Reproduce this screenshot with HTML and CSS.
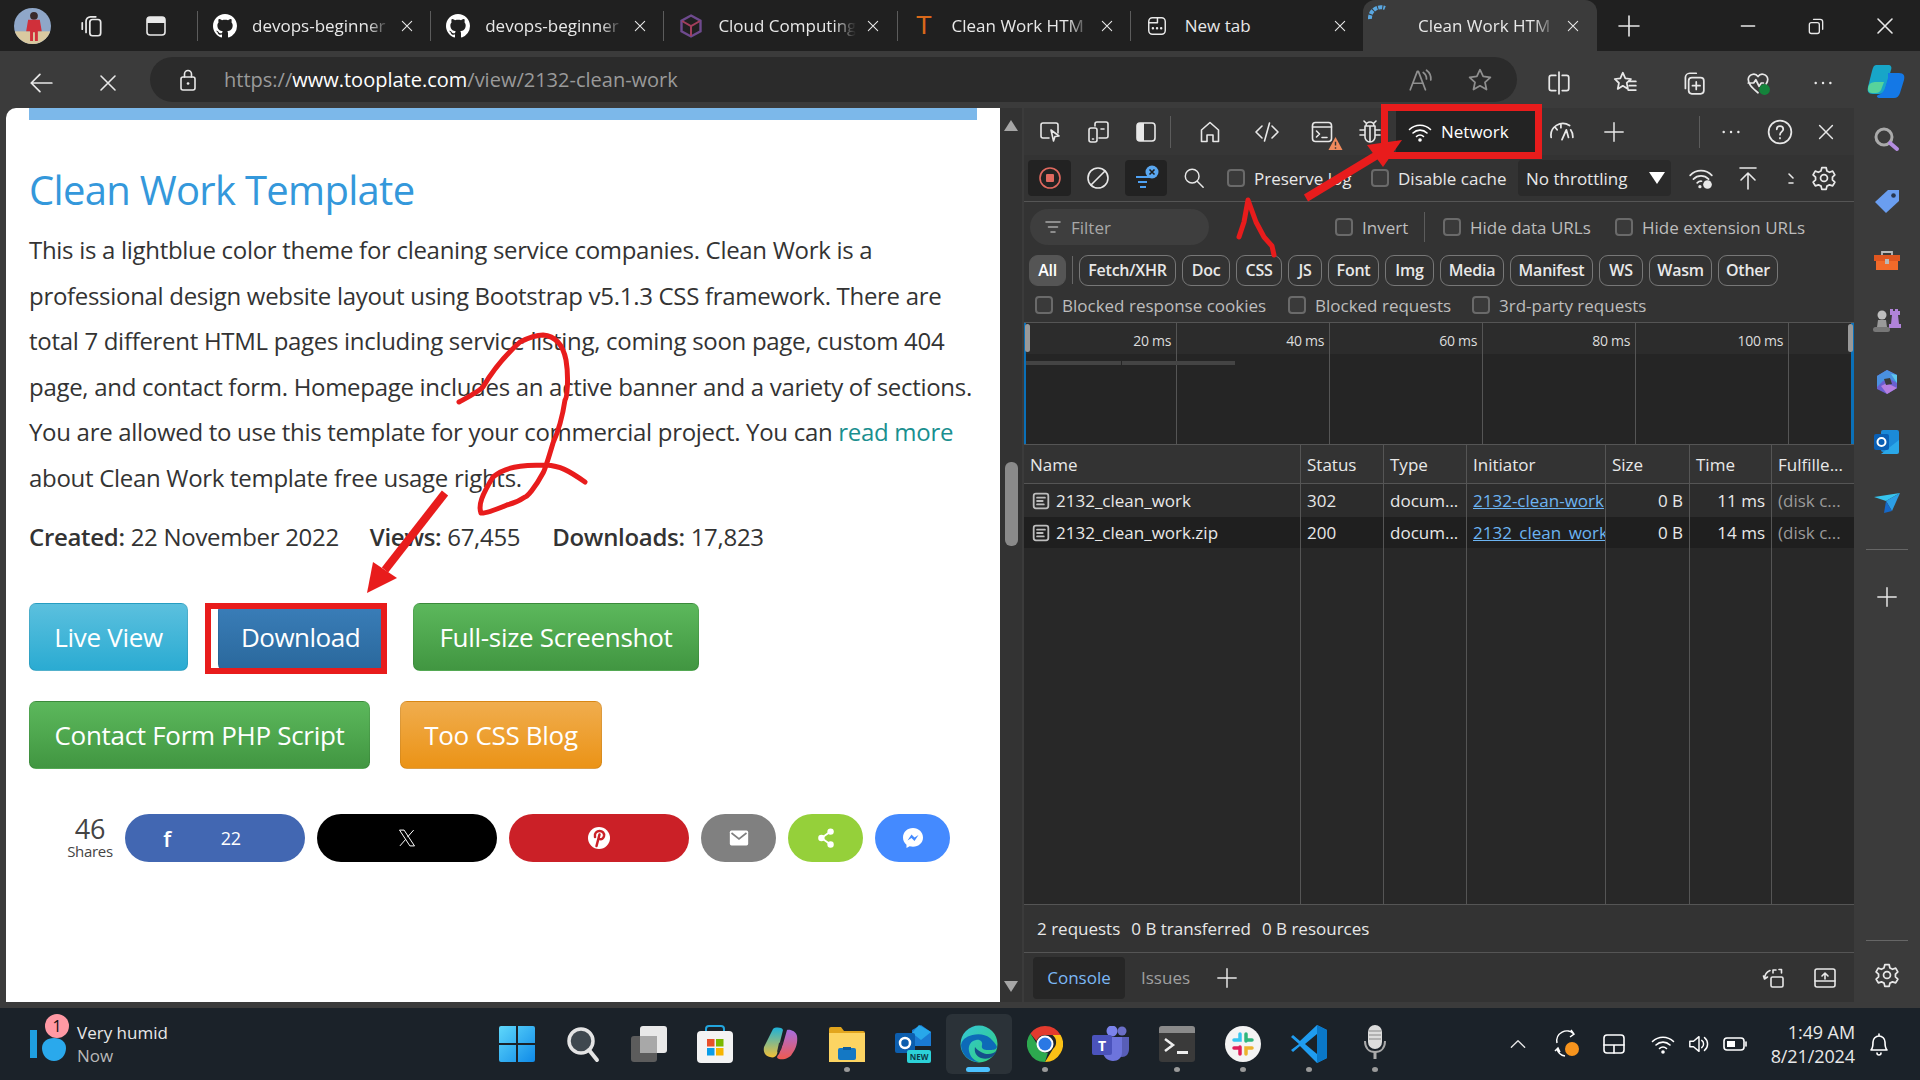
FILE: index.html
```html
<!DOCTYPE html>
<html lang="en">
<head>
    <meta charset="UTF-8">
    <title>Clean Work HTML Template</title>
    <link rel="stylesheet" href="styles.css">
</head>
<body>
    <!-- shared icons -->
    <svg class="icon-defs" width="0" height="0">
        <symbol id="i-close" viewBox="0 0 24 24"><path d="M5 5l14 14M19 5L5 19"/></symbol>
        <symbol id="i-plus" viewBox="0 0 24 24"><path d="M12 2v20M2 12h20"/></symbol>
        <symbol id="i-gear" viewBox="0 0 24 24"><circle cx="12" cy="12" r="3.2"/><path d="M10 2.5h4l.7 3 2.4 1.2 2.9-1 2 3.4-2.2 2.1v2.6l2.2 2.1-2 3.4-2.9-1-2.4 1.2-.7 3h-4l-.7-3-2.4-1.2-2.9 1-2-3.4 2.2-2.1v-2.6L1.9 9.1l2-3.4 2.9 1 2.4-1.2z"/></symbol>
        <symbol id="i-github" viewBox="0 0 16 16"><path class="solid" d="M8 0C3.58 0 0 3.58 0 8c0 3.54 2.29 6.53 5.47 7.59.4.07.55-.17.55-.38 0-.19-.01-.82-.01-1.49-2.01.37-2.53-.49-2.69-.94-.09-.23-.48-.94-.82-1.13-.28-.15-.68-.52-.01-.53.63-.01 1.08.58 1.23.82.72 1.21 1.87.87 2.33.66.07-.52.28-.87.51-1.07-1.78-.2-3.64-.89-3.64-3.95 0-.87.31-1.59.82-2.15-.08-.2-.36-1.02.08-2.12 0 0 .67-.21 2.2.82.64-.18 1.32-.27 2-.27.68 0 1.36.09 2 .27 1.53-1.04 2.2-.82 2.2-.82.44 1.1.16 1.92.08 2.12.51.56.82 1.27.82 2.15 0 3.07-1.87 3.75-3.65 3.95.29.25.54.73.54 1.48 0 1.07-.01 1.93-.01 2.2 0 .21.15.46.55.38A8.013 8.013 0 0016 8c0-4.42-3.58-8-8-8z"/></symbol>
        <symbol id="i-doc" viewBox="0 0 16 16"><rect x="1.5" y="1.5" width="13" height="13" rx="2"/><path d="M4.5 5h7M4.5 8h5M4.5 11h6"/></symbol>
    </svg>

    <header class="tabstrip">
        <div class="strip-left">
            <div class="avatar"><svg viewBox="0 0 37 37"><rect y="24" width="37" height="13" fill="#d9c9a0"/><circle cx="20" cy="8" r="4" fill="#3a2a2a"/><path d="M14 12h12l2 12h-4v10h-3v-9h-2v9h-3V24h-4z" fill="#d0303a"/></svg></div>
            <svg class="ico ico-26" viewBox="0 0 24 24"><rect x="10" y="6" width="10" height="15" rx="2.5"/><path d="M6.5 18V7.500a4 4 0 014-4h5M3 15V9"/></svg>
            <svg class="ico ico-24" viewBox="0 0 24 24"><rect x="3" y="3" width="18" height="18" rx="3"/><path class="solid" d="M3 6a3 3 0 013-3h12a3 3 0 013 3v3H3z"/></svg>
        </div>
        <div class="tab">
            <svg class="tab-icon"><use href="#i-github"/></svg><span class="tab-title">devops-beginner</span><svg class="ico tab-close"><use href="#i-close"/></svg>
        </div>
        <div class="tab">
            <svg class="tab-icon"><use href="#i-github"/></svg><span class="tab-title">devops-beginner</span><svg class="ico tab-close"><use href="#i-close"/></svg>
        </div>
        <div class="tab">
            <svg class="tab-icon" viewBox="0 0 24 24"><path d="M12 1.500l9.500 5.200v10.600L12 22.500l-9.500-5.200V6.700z" fill="none" stroke="#6e4a8e" stroke-width="2.400"/><path d="M3 7l9 5 9-5M12 12v10" fill="none" stroke="#a23f5c" stroke-width="2"/></svg><span class="tab-title">Cloud Computing</span><svg class="ico tab-close"><use href="#i-close"/></svg>
        </div>
        <div class="tab">
            <span class="tab-letter">T</span><span class="tab-title">Clean Work HTM</span><svg class="ico tab-close"><use href="#i-close"/></svg>
        </div>
        <div class="tab">
            <svg class="ico ico-22" viewBox="0 0 24 24"><rect x="3" y="3" width="18" height="18" rx="4"/><path d="M3 8.500h9.500V3"/><path class="dots" d="M7.500 14.500h.1M12 14.500h.1M16.500 14.500h.1"/></svg><span class="tab-title tab-plain">New tab</span><svg class="ico tab-close"><use href="#i-close"/></svg>
        </div>
        <div class="tab tab-active">
            <svg class="tab-spinner" viewBox="0 0 24 24"><path d="M3 15A11 11 0 0118 4"/></svg><span class="tab-title">Clean Work HTM</span><svg class="ico tab-close"><use href="#i-close"/></svg>
        </div>
        <div class="strip-right">
            <svg class="ico ico-24"><use href="#i-plus"/></svg>
            <span></span>
            <svg class="ico ico-20" viewBox="0 0 24 24"><path d="M4 12h16"/></svg>
            <svg class="ico ico-20" viewBox="0 0 24 24"><rect x="4" y="8" width="12" height="13" rx="2.500"/><path d="M9 4h8a3 3 0 013 3v9"/></svg>
            <svg class="ico ico-24"><use href="#i-close"/></svg>
        </div>
    </header>

    <nav class="toolbar">
        <svg class="ico ico-26" viewBox="0 0 24 24"><path d="M22 12H3M11 4l-8 8 8 8"/></svg>
        <svg class="ico ico-24"><use href="#i-close"/></svg>
        <span></span>
        <div class="address">
            <svg class="ico ico-24" viewBox="0 0 24 24"><rect x="5" y="9" width="14" height="13" rx="2"/><path d="M8.500 9V6a3.500 3.500 0 017 0v3"/><path class="dots" d="M12 15.500h.1"/></svg>
            <span class="url">https://<b>www.tooplate.com</b>/view/2132-clean-work</span>
            <svg class="ico ico-26 dim addr-read" viewBox="0 0 24 24"><path d="M3 21L9.500 4h1L17 21M5.500 15h9.500M15 5a7 7 0 013 6M18 3a10 10 0 014 9"/></svg>
            <svg class="ico ico-26 dim" viewBox="0 0 24 24"><path d="M12 2.500l2.900 6.200 6.700.8-5 4.600 1.400 6.700-6-3.400-6 3.400 1.400-6.700-5-4.600 6.700-.8z"/></svg>
        </div>
        <svg class="ico ico-26" viewBox="0 0 24 24"><path d="M12 2v20M9 5H5a2 2 0 00-2 2v10a2 2 0 002 2h4M15 5h4a2 2 0 012 2v10a2 2 0 01-2 2h-4"/></svg>
        <svg class="ico ico-26" viewBox="0 0 24 24"><path d="M10 2.500l2.300 5.200 5.200.6-3.900 3.600 1.100 5.600-4.700-2.900-4.700 2.900L6.400 12 2.500 8.300l5.200-.6zM16 10.500h6M16 14.500h6M15 18.500h7"/></svg>
        <svg class="ico ico-26" viewBox="0 0 24 24"><rect x="8" y="7" width="14" height="15" rx="3"/><path d="M15 11v7M11.500 14.500h7M5 17V7a4 4 0 014-4h6"/></svg>
        <svg class="ico ico-26" viewBox="0 0 24 24"><path d="M12 21C6 16 3 13 3 8.500A5 5 0 0112 6a5 5 0 019 2.500c0 1.500-.5 3-1.500 4.500M3 12h5l2-3 3 6 2-3h2"/><circle class="check" cx="18" cy="18" r="5"/></svg>
        <svg class="ico ico-22" viewBox="0 0 24 24"><path class="dots" d="M4 12h.1M12 12h.1M20 12h.1"/></svg>
        <svg class="logo-copilot" viewBox="0 0 40 40"><path d="M10 4h12c3 0 4 2 3 5l-6 20c-1 3-3 4-6 4H7C2 33 1 30 2 26L6 10c1-4 2-6 4-6z" fill="#17a6c8"/><path d="M3 24c2-3 5-3 8-3h7l-3 8c-1 2-3 3-5 3H6c-4 0-5-4-3-8z" fill="#57d39b"/><path d="M22 12h11c5 0 6 3 5 7l-4 13c-1 3-3 5-6 5H14c-3 0-4-2-2-3 4-1 6-4 7-7l3-10z" fill="#1478e6"/></svg>
    </nav>

    <main class="window">
        <section class="page">
            <div class="page-bar"></div>
            <h1>Clean Work Template</h1>
            <p class="intro">This is a lightblue color theme for cleaning service companies. Clean Work is a professional design website layout using Bootstrap v5.1.3 CSS framework. There are total 7 different HTML pages including service listing, coming soon page, custom 404 page, and contact form. Homepage includes an active banner and a variety of sections. You are allowed to use this template for your commercial project. You can <a href="#">read more</a> about Clean Work template free usage rights.</p>
            <div class="stats">
                <span class="stat-created"><b>Created:</b> 22 November 2022</span>
                <span class="stat-views"><b>Views:</b> 67,455</span>
                <span><b>Downloads:</b> 17,823</span>
            </div>
            <div class="btn-row">
                <a class="btn btn-info btn-live">Live View</a>
                <a class="btn btn-primary btn-download">Download</a>
                <a class="btn btn-success btn-shot">Full-size Screenshot</a>
            </div>
            <div class="btn-row">
                <a class="btn btn-success btn-contact">Contact Form PHP Script</a>
                <a class="btn btn-warning btn-blog">Too CSS Blog</a>
            </div>
            <div class="share">
                <div class="share-count"><strong>46</strong><span>Shares</span></div>
                <a class="pill pill-fb"><b>f</b><span>22</span></a>
                <a class="pill pill-x"><svg viewBox="0 0 24 24" width="20" height="22"><path fill="none" stroke="#fff" stroke-width="1.200" d="M3 2.500h5.500L21 21.500h-5.500zM20 2.500l-7.500 8.500M10.500 13.500L3.500 21.500"/></svg></a>
                <a class="pill pill-pin"><svg viewBox="0 0 24 24" width="24" height="24"><circle cx="12" cy="12" r="11" fill="#fff"/><path d="M8 11c-1-4 2-6 4.500-6 3 0 5 2 4.500 5-.5 2.500-2.500 4-4.500 3M12.500 8.500L9.500 20" fill="none" stroke="#cb2027" stroke-width="2.500" stroke-linecap="round"/></svg></a>
                <a class="pill pill-sm pill-mail"><svg viewBox="0 0 24 24" width="22" height="20"><rect x="1" y="3" width="22" height="18" rx="2" fill="#fff"/><path d="M3 6l9 7 9-7" fill="none" stroke="#808080" stroke-width="2"/></svg></a>
                <a class="pill pill-sm pill-more"><svg viewBox="0 0 24 24" width="22" height="22"><path d="M17 5L7 12l10 7" fill="none" stroke="#fff" stroke-width="2"/><circle cx="17" cy="5" r="3.500" fill="#fff"/><circle cx="7" cy="12" r="3.500" fill="#fff"/><circle cx="17" cy="19" r="3.500" fill="#fff"/></svg></a>
                <a class="pill pill-sm pill-msg"><svg viewBox="0 0 24 24" width="24" height="24"><path d="M12 2C6.300 2 2 6.100 2 11.500c0 3 1.300 5.500 3.500 7.300V22l3.100-1.700c1.100.3 2.200.5 3.400.5 5.700 0 10-4.100 10-9.300S17.700 2 12 2z" fill="#fff"/><path d="M6.500 14.500l4-6 3 3 4-2.500-4 6-3-3z" fill="#448aff"/></svg></a>
            </div>
        </section>

        <div class="page-scroll">
            <span class="scroll-up"></span>
            <span class="scroll-thumb"></span>
            <span class="scroll-down"></span>
        </div>

        <section class="devtools">
            <div class="dt-tabs">
                <svg class="ico ico-24" viewBox="0 0 24 24"><path d="M20 13V5a2 2 0 00-2-2H5a2 2 0 00-2 2v11a2 2 0 002 2h6"/><path d="M13 10l8 6-4 .5-1.500 4.500z"/></svg>
                <svg class="ico ico-24" viewBox="0 0 24 24"><path d="M9 6V4a2 2 0 012-2h9a2 2 0 012 2v12a2 2 0 01-2 2h-7M15 9h3"/><rect x="3" y="8" width="8" height="14" rx="2"/><path d="M6.500 19h1"/></svg>
                <svg class="ico ico-24" viewBox="0 0 24 24"><rect x="3" y="3" width="18" height="18" rx="3"/><path class="solid" d="M3 6a3 3 0 013-3h4v18H6a3 3 0 01-3-3z"/></svg>
                <span class="dt-sep"></span>
                <svg class="ico ico-24" viewBox="0 0 24 24"><path d="M12 2.500L3.500 10v11.500H9V15h6v6.500h5.500V10z"/></svg>
                <svg class="ico ico-24" viewBox="0 0 24 24"><path d="M7 6l-6 6 6 6M17 6l6 6-6 6M14.500 3l-5 18"/></svg>
                <div class="console-icon">
                    <svg class="ico ico-24" viewBox="0 0 24 24"><rect x="2.500" y="2.500" width="19" height="19" rx="3"/><path d="M2.500 7h19M6.500 11l3 3-3 3M12 17.500h5"/></svg>
                    <svg class="warn" viewBox="0 0 16 16"><path d="M8 1l7.500 14H.5z" fill="#f08a5d"/><path d="M8 6v4M8 12v1.500" stroke="#333" stroke-width="1.500"/></svg>
                </div>
                <svg class="ico ico-24" viewBox="0 0 24 24"><path d="M8 6a4 4 0 018 0M7 6h10v11a5 5 0 01-10 0zM12 6v16M7 10H2M7 15H2M17 10h5M17 15h5M8 3L6 1M16 3l2-2"/></svg>
                <span></span>
                <div class="dt-network">
                    <svg class="ico ico-24" viewBox="0 0 24 24"><path d="M1.500 9.500a15 15 0 0121 0M5 13a10 10 0 0114 0M8.500 16.500a5 5 0 017 0"/><circle class="solid" cx="12" cy="20" r="1.800"/></svg>
                    <span>Network</span>
                </div>
                <svg class="ico ico-26" viewBox="0 0 24 24"><path d="M2 17A11 11 0 0119 6M22 17a11 11 0 00-2-7M6 8l1.500 2M11 5.500v2.500M12 19l4-9 2 7"/></svg>
                <svg class="ico ico-22"><use href="#i-plus"/></svg>
                <span class="dt-sep dt-sep-end"></span>
                <svg class="ico ico-22" viewBox="0 0 24 24"><path class="dots" d="M4 12h.1M12 12h.1M20 12h.1"/></svg>
                <svg class="ico ico-26" viewBox="0 0 24 24"><circle cx="12" cy="12" r="10.500"/><path d="M9 9.500a3 3 0 116 0c0 2-3 2.500-3 5M12 17.500v.5"/></svg>
                <svg class="ico ico-22"><use href="#i-close"/></svg>
            </div>

            <div class="dt-controls">
                <div class="tool-box"><svg class="ico ico-24 rec" viewBox="0 0 24 24"><circle cx="12" cy="12" r="10"/><rect class="solid" x="8" y="8" width="8" height="8" rx="1"/></svg></div>
                <svg class="ico ico-24" viewBox="0 0 24 24"><circle cx="12" cy="12" r="10"/><path d="M5 19L19 5"/></svg>
                <div class="tool-box filter-toggle">
                    <svg width="26" height="26" viewBox="0 0 26 26"><path d="M3 12h14M5 17h9M7 22h6" fill="none" stroke="#4ea1f3" stroke-width="1.800"/><circle cx="19" cy="7" r="6.500" fill="#5aa7f0"/><path d="M16.500 4.500l5 5M21.500 4.500l-5 5" stroke="#1d1d1d" stroke-width="1.600"/></svg>
                </div>
                <svg class="ico ico-22" viewBox="0 0 24 24"><circle cx="10" cy="10" r="7.500"/><path d="M15.500 15.500L22 22"/></svg>
                <label class="check check-first"><i></i>Preserve log</label>
                <label class="check"><i></i>Disable cache</label>
                <div class="throttle"><span>No throttling</span><i></i></div>
                <svg class="ico ico-26" viewBox="0 0 24 24"><path d="M2 9.500a14 14 0 0120 0M5 13a10 10 0 0114 0M8.500 16.500a5 5 0 014-1.500"/><circle class="solid" cx="11" cy="20" r="1.500"/><circle class="solid" cx="18" cy="18" r="4"/></svg>
                <svg class="ico ico-24" viewBox="0 0 24 24"><path d="M4 2h16M12 23V7M5 14l7-7 7 7"/></svg>
                <svg class="ico chevrons" viewBox="0 0 16 16"><path d="M6 4l4 4M6 13h4"/></svg>
                <svg class="ico ico-26"><use href="#i-gear"/></svg>
            </div>

            <div class="dt-filter">
                <div class="filter-input">
                    <svg class="ico filter-lines" viewBox="0 0 16 16"><path d="M1 3h14M3.500 8h9M6 13h4"/></svg>
                    <span>Filter</span>
                </div>
                <span></span>
                <label class="check dim-label"><i></i>Invert</label>
                <span class="dt-sep"></span>
                <label class="check dim-label"><i></i>Hide data URLs</label>
                <label class="check dim-label"><i></i>Hide extension URLs</label>
            </div>

            <div class="dt-chips">
                <span class="chip chip-all">All</span>
                <span class="chip-sep"></span>
                <span class="chip">Fetch/XHR</span>
                <span class="chip">Doc</span>
                <span class="chip">CSS</span>
                <span class="chip">JS</span>
                <span class="chip">Font</span>
                <span class="chip">Img</span>
                <span class="chip">Media</span>
                <span class="chip">Manifest</span>
                <span class="chip">WS</span>
                <span class="chip">Wasm</span>
                <span class="chip">Other</span>
            </div>

            <div class="dt-blocked">
                <label class="check dim-label"><i></i>Blocked response cookies</label>
                <label class="check dim-label"><i></i>Blocked requests</label>
                <label class="check dim-label"><i></i>3rd-party requests</label>
            </div>

            <div class="overview">
                <div class="ov-cell">20 ms</div>
                <div class="ov-cell">40 ms</div>
                <div class="ov-cell">60 ms</div>
                <div class="ov-cell">80 ms</div>
                <div class="ov-cell">100 ms</div>
                <span class="ov-bar ov-bar-a"></span>
                <span class="ov-bar ov-bar-b"></span>
                <span class="ov-handle ov-handle-l"></span>
                <span class="ov-handle ov-handle-r"></span>
            </div>

            <div class="requests">
                <div class="th">Name</div><div class="th">Status</div><div class="th">Type</div><div class="th">Initiator</div><div class="th">Size</div><div class="th">Time</div><div class="th">Fulfille...</div>

                <div class="td"><svg class="ico doc-icon"><use href="#i-doc"/></svg>2132_clean_work</div><div class="td">302</div><div class="td">docum...</div><div class="td td-link"><a href="#">2132-clean-work</a></div><div class="td td-num">0 B</div><div class="td td-num">11 ms</div><div class="td td-dim">(disk c...</div>

                <div class="td td-alt"><svg class="ico doc-icon"><use href="#i-doc"/></svg>2132_clean_work.zip</div><div class="td td-alt">200</div><div class="td td-alt">docum...</div><div class="td td-alt td-link"><a href="#">2132_clean_work</a></div><div class="td td-alt td-num">0 B</div><div class="td td-alt td-num">14 ms</div><div class="td td-alt td-dim">(disk c...</div>

                <div class="tf"></div><div class="tf"></div><div class="tf"></div><div class="tf"></div><div class="tf"></div><div class="tf"></div><div class="tf"></div>
            </div>

            <div class="dt-summary"><span>2 requests</span><span>0 B transferred</span><span>0 B resources</span></div>

            <div class="drawer">
                <span class="drawer-tab">Console</span>
                <span class="drawer-issues">Issues</span>
                <svg class="ico ico-22"><use href="#i-plus"/></svg>
                <svg class="ico ico-24 drawer-rotate" viewBox="0 0 24 24"><rect x="9" y="11" width="12" height="10" rx="1.500"/><path d="M11 7V4h3M17 3.500h2.500V7M8 4.500C4.500 6 2.500 9 2.500 13l3-2M2.500 13l-1-3"/></svg>
                <svg class="ico ico-24" viewBox="0 0 24 24"><rect x="2" y="3" width="20" height="18" rx="2"/><path d="M2 15h20M12 13V7M9 10l3-3 3 3"/></svg>
            </div>
        </section>

        <aside class="sidebar">
            <svg width="30" height="30" viewBox="0 0 30 30"><circle cx="12" cy="12" r="8" fill="none" stroke="#aaa" stroke-width="3"/><path d="M18 18l7 6" stroke="#b48de0" stroke-width="4" stroke-linecap="round"/></svg>
            <svg width="28" height="28" viewBox="0 0 28 28"><path d="M2 15L15 3h11v11L13 26z" fill="#6a9ef0"/><circle cx="20.500" cy="8.500" r="2.300" fill="#28374f"/></svg>
            <svg width="28" height="28" viewBox="0 0 28 28"><path d="M9 9V5h10v4" fill="none" stroke="#bbb" stroke-width="1.800"/><rect x="1" y="8" width="26" height="6" fill="#e0561f"/><rect x="3" y="14" width="22" height="9" fill="#f26a2a"/><rect x="12" y="12" width="4" height="5" fill="#b9b9b9"/></svg>
            <svg width="30" height="30" viewBox="0 0 30 30"><path d="M18 3h3v2h2V3h3v2h2v4h-2l1 9h2v4H17v-4h2l1-9h-2z" fill="#b083d8"/><circle cx="10" cy="9" r="4.500" fill="#c0c0c0"/><path d="M6 14h8l1 7H5z" fill="#9a9a9a"/><rect x="1" y="21" width="17" height="5" rx="2.500" fill="#777"/></svg>
            <svg width="28" height="28" viewBox="0 0 28 28"><path d="M14 2l10 5v13l-10 6-10-5V8z" fill="#6a5fd0"/><path d="M14 2l10 5v8l-7-4-7 2-6 6V8z" fill="#4a90e0"/><path d="M8 18l6-3 10 5-10 6z" fill="#b57fe0"/><path d="M18 6l6 1v8z" fill="#5ec8ee"/><path d="M11 11l6-1 2 6-6 1z" fill="#3b3b3b"/></svg>
            <svg width="28" height="28" viewBox="0 0 28 28"><rect x="8" y="2" width="18" height="22" rx="2" fill="#1b8ad8"/><path d="M26 12v12a2 2 0 01-2 2H8z" fill="#2aa7e8"/><rect x="1" y="6" width="15" height="16" rx="2" fill="#0a5fb4"/><circle cx="8.500" cy="14" r="4" fill="none" stroke="#fff" stroke-width="2"/></svg>
            <svg width="28" height="28" viewBox="0 0 28 28"><path d="M1 8l26-4-14 8z" fill="#36c4ee"/><path d="M27 4L19 22l-6-10z" fill="#2c9fe6"/><path d="M13 12l-2 12 8-2z" fill="#1668c8"/></svg>
            <span class="side-sep"></span>
            <svg class="ico ico-22"><use href="#i-plus"/></svg>
            <span></span>
            <span class="side-sep"></span>
            <svg class="ico ico-26 side-gear"><use href="#i-gear"/></svg>
        </aside>
    </main>

    <footer class="taskbar">
        <div class="weather">
            <div class="weather-icon">
                <svg width="38" height="32" viewBox="0 0 38 32"><rect x="0" y="0" width="7" height="28" fill="#1f9fe0"/><path d="M12 18c0-6 5-10 12-10s12 4 12 10c0 7-5 13-12 13s-12-6-12-13z" fill="#2aa9ec"/></svg>
                <span class="badge">1</span>
            </div>
            <div class="weather-text"><span>Very humid</span><small>Now</small></div>
        </div>

        <div class="task-slot"><svg width="36" height="36" viewBox="0 0 36 36"><defs><linearGradient id="w" x1="0" y1="0" x2="1" y2="1"><stop offset="0" stop-color="#5fd8fb"/><stop offset="1" stop-color="#0f8ae8"/></linearGradient></defs><path d="M0 2a2 2 0 012-2h15v17H0zM19 0h15a2 2 0 012 2v15H19zM0 19h17v17H2a2 2 0 01-2-2zM19 19h17v15a2 2 0 01-2 2H19z" fill="url(#w)"/></svg></div>
        <div class="task-slot"><svg width="36" height="38" viewBox="0 0 36 38"><circle cx="16" cy="16" r="12" fill="#3f484f" stroke="#e4e4e4" stroke-width="3.500"/><path d="M24 25l8 10" stroke="#e4e4e4" stroke-width="4" stroke-linecap="round"/></svg></div>
        <div class="task-slot"><svg width="36" height="36" viewBox="0 0 36 36"><rect x="0" y="10" width="26" height="26" rx="3" fill="#5c5c5c"/><rect x="9" y="0" width="27" height="27" rx="3" fill="#e9e9e9"/><rect x="9" y="10" width="17" height="17" fill="#a8a8a8"/></svg></div>
        <div class="task-slot"><svg width="36" height="38" viewBox="0 0 36 38"><path d="M9 8V4a3 3 0 013-3h12a3 3 0 013 3v4" fill="none" stroke="#22a5dd" stroke-width="2"/><rect y="6" width="36" height="32" rx="4" fill="#f3f3f3"/><rect x="10" y="14" width="7.500" height="7.500" fill="#e8502a"/><rect x="19" y="14" width="7.500" height="7.500" fill="#7ab800"/><rect x="10" y="23" width="7.500" height="7.500" fill="#0a9de8"/><rect x="19" y="23" width="7.500" height="7.500" fill="#f6b400"/></svg></div>
        <div class="task-slot"><svg width="36" height="36" viewBox="0 0 36 36"><defs><linearGradient id="c1" x1="0" y1="0" x2="0" y2="1"><stop offset="0" stop-color="#1eb2d8"/><stop offset="1" stop-color="#f2c037"/></linearGradient><linearGradient id="c2" x1="0" y1="0" x2="0" y2="1"><stop offset="0" stop-color="#a66de0"/><stop offset="1" stop-color="#ef5a50"/></linearGradient></defs><path d="M10 3c2-2 9-2 10 1l-6 24c-1 3-4 4-7 3-5-1-7-5-6-10z" fill="url(#c1)"/><path d="M24 4c3-1 9 1 10 6 1 6-1 13-5 18-2 4-8 6-13 5-3-1-2-3 0-5l4-10z" fill="url(#c2)"/><path d="M16 17l4-2-2 9-4 2z" fill="#2b2b33"/></svg></div>
        <div class="task-slot task-run"><svg width="36" height="36" viewBox="0 0 36 36"><path d="M0 3a2 2 0 012-2h10l3 4h19a2 2 0 012 2v3H0z" fill="#e2a51d"/><rect y="7" width="36" height="29" fill="#fcd462"/><rect x="9" y="22" width="18" height="12" rx="2" fill="#1478c4"/><rect x="14" y="21" width="8" height="3" fill="#0c5d9e"/></svg></div>
        <div class="task-slot"><svg width="36" height="38" viewBox="0 0 36 38"><path d="M17 5l9-5 10 7v14H17z" fill="#1a7ad2"/><path d="M24 0l12 7-10 8-9-7z" fill="#28a8ea"/><rect y="8" width="20" height="20" rx="2" fill="#0c5eae"/><circle cx="10" cy="18" r="5" fill="none" stroke="#fff" stroke-width="2.500"/><rect x="12" y="25" width="24" height="13" rx="2" fill="#2cd2d8"/><text x="24" y="35" class="new-text">NEW</text></svg></div>
        <div class="task-slot task-active"><svg width="38" height="38" viewBox="0 0 38 38"><defs><linearGradient id="e1" x1="0" y1="0" x2="1" y2="1"><stop offset="0" stop-color="#35c5d8"/><stop offset="1" stop-color="#31d07d"/></linearGradient></defs><circle cx="19" cy="19" r="18.500" fill="url(#e1)"/><path d="M1 20a17 12 0 0129-7c3 3 6 6 7 9-1 3-4 3-9 3-4 0-7-1-6-5 1-3-2-6-6-5-5 1-8 5-7 11 1 5 4 9 10 11-10 0-18-8-18-17z" fill="#0d6ab8"/><path d="M15 22c-1 5 1 9 6 11 6 2 13 0 16-8-3 5-12 5-16 2-3-2-5-3-6-5z" fill="#154f8a"/></svg></div>
        <div class="task-slot task-run"><svg width="36" height="36" viewBox="0 0 36 36"><path d="M18 0a18 18 0 0115.600 9H18a9 9 0 00-8.500 6L3.400 7.500A18 18 0 0118 0z" fill="#e33b2e"/><path d="M33.600 9A18 18 0 0118 36l8-13a9 9 0 00-.5-14z" fill="#fbc116"/><path d="M3.400 7.500L10 18a9 9 0 0011 8.500L18 36A18 18 0 013.400 7.500z" fill="#2da94f"/><circle cx="18" cy="18" r="8.500" fill="#fff"/><circle cx="18" cy="18" r="6.500" fill="#2a78e4"/></svg></div>
        <div class="task-slot"><svg width="38" height="36" viewBox="0 0 38 36"><circle cx="30" cy="5" r="4.500" fill="#6b6fc7"/><path d="M23 11h14v12c0 5-3 8-7 8s-7-3-7-7z" fill="#585eb8"/><circle cx="20" cy="5" r="5.500" fill="#7b83eb"/><path d="M11 11h19v15c0 6-4 9-9 9s-10-4-10-9z" fill="#6d74dc"/><rect y="9" width="20" height="20" rx="2" fill="#4b53bc"/><text x="10" y="25" class="teams-text">T</text></svg></div>
        <div class="task-slot task-run"><svg width="36" height="36" viewBox="0 0 36 36"><rect width="36" height="36" rx="3" fill="#3a3a3a"/><path d="M0 3a3 3 0 013-3h30a3 3 0 013 3v4H0z" fill="#8a8a8a"/><path d="M6 13l8 6-8 6" fill="none" stroke="#eee" stroke-width="2.500"/><rect x="18" y="25" width="11" height="3" fill="#eee"/></svg></div>
        <div class="task-slot task-run"><svg width="36" height="36" viewBox="0 0 36 36"><circle cx="18" cy="18" r="18" fill="#f4f4f4"/><path d="M15 8v6h-6" fill="none" stroke="#36c5f0" stroke-width="3.500" stroke-linecap="round"/><path d="M21 8v7M27 14h-4" fill="none" stroke="#2eb67d" stroke-width="3.500" stroke-linecap="round"/><path d="M21 28v-6h6" fill="none" stroke="#ecb22e" stroke-width="3.500" stroke-linecap="round"/><path d="M15 28v-7M9 22h4" fill="none" stroke="#e01e5a" stroke-width="3.500" stroke-linecap="round"/></svg></div>
        <div class="task-slot task-run"><svg width="36" height="38" viewBox="0 0 36 38"><path d="M26 0l10 5v28l-10 5L9 21 2 27l-2-2 8-6-8-7 2-2 7 6z" fill="#1f9cf0"/><path d="M26 0v38l10-5V5z" fill="#0a78c8"/><path d="M26 9L14 19l12 10z" fill="#1b2229"/></svg></div>
        <div class="task-slot task-run"><svg width="22" height="38" viewBox="0 0 22 38"><rect x="4" y="0" width="14" height="24" rx="7" fill="#dcdcdc"/><path d="M5 6h12M5 10h12M5 14h12" stroke="#888" stroke-width="1"/><path d="M1 16c0 7 4 11 10 11s10-4 10-11" fill="none" stroke="#aaa" stroke-width="2"/><path d="M11 27v7" stroke="#aaa" stroke-width="3"/></svg></div>

        <div class="tray">
            <span></span>
            <svg class="ico ico-20" viewBox="0 0 24 24"><path d="M4 16l8-8 8 8"/></svg>
            <svg width="28" height="30" viewBox="0 0 28 30"><path d="M3 14A10 10 0 0120 5M17 1l3 4-4 3M3 20a10 10 0 008 7M1 22l3-3 2 4" fill="none" stroke="#fff" stroke-width="1.500"/><circle cx="18" cy="20" r="7" fill="#f7941d"/></svg>
            <svg class="ico ico-24" viewBox="0 0 24 24"><rect x="2" y="3" width="20" height="18" rx="3"/><path d="M2 13h20M12 13v8"/></svg>
            <svg class="ico ico-24" viewBox="0 0 24 24"><path d="M1.500 9.500a15 15 0 0121 0M5 13a10 10 0 0114 0M8.500 16.500a5 5 0 017 0"/><circle class="solid" cx="12" cy="20" r="1.800"/></svg>
            <svg class="ico ico-24" viewBox="0 0 24 24"><path d="M2 9v6h4l6 5V4L6 9zM15 8a5 5 0 010 8M18 5a9 9 0 010 14"/></svg>
            <svg class="ico ico-24" viewBox="0 0 24 24"><rect x="1" y="6" width="20" height="12" rx="3"/><rect class="solid" x="4" y="9" width="8" height="6"/><path d="M23 10v4"/></svg>
            <div class="clock"><span>1:49 AM</span><span>8/21/2024</span></div>
            <svg class="ico ico-24" viewBox="0 0 24 24"><path d="M4 18c2-2 2-4 2-8a6 6 0 0112 0c0 4 0 6 2 8zM10 21a2 2 0 004 0M12 2v2"/></svg>
        </div>
    </footer>

    <!-- red marks drawn over the screenshot -->
    <svg class="annotations" viewBox="0 0 1920 1080">
        <rect class="mark" x="1384.500" y="107.500" width="154" height="48" stroke-width="7"/>
        <rect class="mark" x="208" y="606" width="176" height="65" stroke-width="6"/>
        <path class="mark" stroke-width="8" d="M1306 198L1382 152"/>
        <path class="mark-fill" d="M1402 140L1367 145L1383 167z"/>
        <path class="mark" stroke-width="8" d="M445 493L385 570"/>
        <path class="mark-fill" d="M367 593L373 562L397 578z"/>
        <path class="mark mark-pen" stroke-width="5" d="M1239 237L1244 222L1248 200L1256 222L1264 237L1272 246L1274 255"/>
        <path class="mark mark-pen" stroke-width="5" d="M459 402C470 396 478 392 483 387C490 375 500 360 520 342C532 336 540 335 543 335C555 336 563 345 566 360C569 378 567 398 565 400C562 420 558 432 553 443C548 460 545 470 543 473C535 488 527 497 525 497C515 504 505 505 507 505C495 510 485 514 481 513C478 505 482 495 493 477C505 467 520 465 546 465C560 466 568 470 585 482"/>
    </svg>
</body>
</html>
```

FILE: styles.css
```css
* {
    box-sizing: border-box;
}
html, body {
    margin: 0;
    padding: 0;
}
body {
    position: relative;
    width: 1920px;
    height: 1080px;
    overflow: hidden;
    display: flex;
    flex-direction: column;
    background-color: #3b3b3b;
    color: #e8e8e8;
    font-family: "Open Sans", "Noto Sans", sans-serif;
    font-size: 17px;
}
.icon-defs {
    position: absolute;
}

/* stroke icons */
.ico {
    fill: none;
    stroke: currentColor;
    stroke-width: 1.6;
    stroke-linecap: round;
    stroke-linejoin: round;
    flex: none;
}
.ico .solid {
    fill: currentColor;
    stroke: none;
}
.ico .dots {
    stroke-width: 2.6;
}
.ico-20 { width: 20px; height: 20px; }
.ico-22 { width: 22px; height: 22px; }
.ico-24 { width: 24px; height: 24px; }
.ico-26 { width: 26px; height: 26px; }
.dim { color: #8f8f8f; }
.ico .check {
    fill: #14833b;
    stroke: none;
}

/* tab strip */
.tabstrip {
    flex: none;
    height: 51px;
    display: flex;
    background-color: #202020;
}
.strip-left {
    flex: none;
    width: 197px;
    display: grid;
    grid-template-columns: 64px 56px 72px;
    place-items: center;
}
.avatar {
    width: 37px;
    height: 36px;
    border-radius: 50%;
    overflow: hidden;
    background-color: #8fa7c9;
}
.avatar svg {
    display: block;
    width: 100%;
    height: 100%;
}
.tab {
    flex: none;
    width: 233.2px;
    display: grid;
    grid-template-columns: 55px 138px 34px;
    align-items: center;
    background: linear-gradient(#5c5c5c, #5c5c5c) no-repeat left center / 1px 30px;
}
.tab-icon {
    width: 24px;
    height: 24px;
    justify-self: center;
}
#i-github path {
    fill: #fff;
}
.tab-letter {
    justify-self: center;
    color: #d9681a;
    font-size: 26px;
    font-family: "Liberation Sans", sans-serif;
}
.tab .ico-22 {
    justify-self: center;
}
.tab-title {
    white-space: nowrap;
    overflow: hidden;
    -webkit-mask-image: linear-gradient(to right, #000 84%, transparent);
    mask-image: linear-gradient(to right, #000 84%, transparent);
}
.tab-plain {
    -webkit-mask-image: none;
    mask-image: none;
}
.tab-close {
    width: 16px;
    height: 16px;
    justify-self: center;
}
.tab-active {
    width: 234px;
    background: #3b3b3b;
    border-radius: 12px 12px 0 0;
}
.tab-spinner {
    width: 24px;
    height: 24px;
    margin: -20px 0 0 4px;
    fill: none;
    stroke: #5aa7e0;
    stroke-width: 4;
    stroke-dasharray: 4 1;
}
.strip-right {
    flex: 1;
    display: grid;
    grid-template-columns: 64px 53px 68px 68px 70px;
    place-items: center;
}

/* address bar row */
.toolbar {
    flex: none;
    height: 57px;
    display: grid;
    grid-template-columns: 82px 52px 16px 1367px 84px 48px 88px 42px 88px 38px;
    justify-items: center;
    align-items: center;
    padding-top: 6px;
}
.address {
    justify-self: stretch;
    height: 45px;
    align-self: start;
    display: flex;
    align-items: center;
    gap: 24px;
    padding: 0 24px 0 26px;
    background-color: #2b2b2b;
    border-radius: 23px;
}
.url {
    flex: 1;
    color: #9a9a9a;
    font-size: 20px;
}
.url b {
    color: #fff;
    font-weight: 400;
}
.addr-read {
    margin-right: 10px;
}
.logo-copilot {
    width: 40px;
    height: 40px;
    margin-top: -4px;
}

/* main area */
.window {
    flex: none;
    height: 900px;
    display: flex;
    align-items: flex-start;
}
.page {
    flex: none;
    width: 994px;
    height: 894px;
    margin-left: 6px;
    padding: 0 23px;
    background-color: #fff;
    color: #333;
    border-radius: 10px 0 0 0;
    font-size: 24px;
    letter-spacing: -0.3px;
}
.page-bar {
    height: 12px;
    background-color: #7cb8ea;
}
.page h1 {
    margin: 43px 0 10px;
    color: #3498db;
    font-size: 40px;
    font-weight: 400;
    line-height: 54px;
    letter-spacing: -0.7px;
}
.intro {
    margin: 0;
    line-height: 45.5px;
}
.intro a {
    color: #1a8f8f;
    text-decoration: none;
}
.stats {
    margin-top: 17px;
    line-height: 40px;
}
.stats b {
    font-weight: 600;
}
.stat-created {
    margin-right: 25px;
}
.stat-views {
    margin-right: 26px;
}
.btn-row {
    display: flex;
    gap: 30px;
    margin-top: 30px;
}
.stats + .btn-row {
    margin-top: 46px;
}
.btn {
    display: flex;
    align-items: center;
    justify-content: center;
    height: 68px;
    border-radius: 7px;
    color: #fff;
    font-size: 26px;
    letter-spacing: -0.3px;
    border: 1px solid rgba(0, 0, 0, 0.08);
}
.btn-info { background: linear-gradient(#5bc0de, #2aabd2); }
.btn-primary { background: linear-gradient(#3a7eb9, #2a689c); }
.btn-success { background: linear-gradient(#5cb85c, #419641); }
.btn-warning { background: linear-gradient(#f0ad4e, #eb9316); }
.btn-live { width: 159px; }
.btn-download { width: 165px; letter-spacing: -0.5px; }
.btn-shot { width: 286px; }
.btn-contact { width: 341px; }
.btn-blog { width: 202px; }

.share {
    display: flex;
    align-items: center;
    gap: 12px;
    margin-top: 45px;
}
.share-count {
    width: 84px;
    padding-left: 38px;
    display: flex;
    flex-direction: column;
    align-items: center;
    color: #444;
}
.share-count strong {
    font-size: 27px;
    font-weight: 400;
    line-height: 26px;
}
.share-count span {
    font-size: 15px;
    line-height: 18px;
}
.pill {
    flex: none;
    width: 180px;
    height: 48px;
    display: flex;
    align-items: center;
    justify-content: center;
    border-radius: 24px;
    color: #fff;
}
.pill-sm {
    width: 75px;
}
.pill-fb { background-color: #4267b2; gap: 50px; padding-right: 26px; font-size: 18px; }
.pill-fb b { font-size: 22px; font-weight: 600; }
.pill-x { background-color: #000; }
.pill-pin { background-color: #cb2027; }
.pill-mail { background-color: #808080; }
.pill-more { background-color: #95d03a; }
.pill-msg { background-color: #448aff; }

/* page scrollbar */
.page-scroll {
    flex: none;
    width: 24px;
    height: 894px;
    display: flex;
    flex-direction: column;
    align-items: center;
    padding: 12px 0 10px;
    background-color: #333;
    border-right: 2px solid #3b3b3b;
}
.scroll-up, .scroll-down {
    width: 0;
    height: 0;
    border-left: 7px solid transparent;
    border-right: 7px solid transparent;
}
.scroll-up {
    border-bottom: 11px solid #a6a6a6;
}
.scroll-down {
    margin-top: auto;
    border-top: 11px solid #a6a6a6;
}
.scroll-thumb {
    width: 13px;
    height: 84px;
    margin-top: 331px;
    border-radius: 6px;
    background-color: #8a8a8a;
}

/* devtools */
.devtools {
    flex: none;
    width: 830px;
    height: 894px;
    display: flex;
    flex-direction: column;
    background-color: #333;
}
.dt-tabs {
    flex: none;
    height: 47px;
    padding-left: 2px;
    display: grid;
    grid-template-columns: 48px 48px 48px 4px 72px 42px 68px 28px 12px 140px 52px 52px 60px 62px 36px 56px;
    justify-items: center;
    align-items: center;
    background-color: #363636;
}
.dt-sep {
    width: 1px;
    height: 32px;
    background-color: #5c5c5c;
    justify-self: start;
}
.dt-sep-end {
    justify-self: end;
}
.console-icon {
    position: relative;
    width: 24px;
    height: 24px;
}
.warn {
    position: absolute;
    right: -9px;
    bottom: -7px;
    width: 15px;
    height: 15px;
}
.dt-network {
    justify-self: stretch;
    align-self: end;
    height: 44px;
    display: flex;
    align-items: center;
    gap: 9px;
    padding-left: 12px;
    background-color: #232323;
    border-bottom: 3px solid #0a6cc4;
    color: #fff;
}
.dt-controls {
    flex: none;
    height: 47px;
    padding-left: 4px;
    display: grid;
    grid-template-columns: 43px 54px 42px 54px 150px 147px 153px 60px 34px 42px 34px;
    align-items: center;
    justify-items: center;
    border-bottom: 1px solid #555;
}
.tool-box {
    justify-self: stretch;
    height: 36px;
    display: flex;
    align-items: center;
    justify-content: center;
    background-color: #222;
    border-radius: 4px;
}
.rec {
    color: #e0695f;
}
.chevrons {
    width: 16px;
    height: 16px;
    justify-self: end;
    margin-right: 8px;
}
.check {
    justify-self: start;
    display: flex;
    align-items: center;
    gap: 9px;
    white-space: nowrap;
}
.check i {
    flex: none;
    width: 18px;
    height: 18px;
    border: 2px solid #6a6a6a;
    border-radius: 4px;
    background-color: #3a3a3a;
}
.check-first {
    margin-left: 6px;
}
.dim-label {
    color: #bdbdbd;
}
.throttle {
    justify-self: stretch;
    height: 36px;
    display: flex;
    align-items: center;
    justify-content: space-between;
    padding: 0 6px 0 8px;
    background-color: #2a2a2a;
    border-radius: 4px;
}
.throttle i {
    width: 0;
    height: 0;
    border-left: 8px solid transparent;
    border-right: 8px solid transparent;
    border-top: 12px solid #fff;
}
.dt-filter {
    flex: none;
    height: 50px;
    padding: 6px 0 6px 6px;
    display: grid;
    grid-template-columns: 179px 126px 89px 19px 172px 1fr;
    align-items: center;
}
.dt-filter .dt-sep {
    height: 30px;
}
.filter-input {
    height: 36px;
    display: flex;
    align-items: center;
    gap: 10px;
    padding-left: 15px;
    border-radius: 18px;
    background-color: #3e3e3e;
    color: #a8a8a8;
}
.filter-lines {
    width: 16px;
    height: 16px;
}
.dt-chips {
    flex: none;
    height: 36px;
    padding-left: 5px;
    display: grid;
    grid-template-columns: 37px 1px 97px 48px 46px 34px 51px 49px 64px 83px 44px 63px 60px;
    column-gap: 6px;
    align-items: center;
}
.chip {
    height: 31px;
    display: flex;
    align-items: center;
    justify-content: center;
    border: 1px solid #777;
    border-radius: 9px;
    font-weight: 600;
    font-size: 16px;
    letter-spacing: -0.25px;
    color: #e8e8e8;
}
.chip-all {
    border-color: #555;
    background-color: #555;
    color: #fff;
}
.chip-sep {
    height: 28px;
    background-color: #666;
}
.dt-blocked {
    flex: none;
    height: 35px;
    padding-left: 11px;
    display: grid;
    grid-template-columns: 253px 184px 1fr;
    align-items: center;
    border-bottom: 1px solid #555;
}
.overview {
    position: relative;
    flex: none;
    height: 121px;
    display: flex;
    border-left: 2px solid #0a70b8;
    border-right: 3px solid #0a70b8;
    background: linear-gradient(#2c2c2c 31px, #252525 31px);
    font-size: 14px;
    letter-spacing: -0.3px;
}
.ov-cell {
    flex: none;
    width: 153px;
    padding: 8px 5px 0 0;
    text-align: right;
    color: #ddd;
    border-right: 1px solid #555;
}
.ov-cell:first-child {
    width: 151px;
}
.ov-bar {
    position: absolute;
    top: 38px;
    height: 4px;
    background-color: #444;
}
.ov-bar-a { left: 0; width: 95px; }
.ov-bar-b { left: 96px; width: 113px; }
.ov-handle {
    position: absolute;
    top: 1px;
    width: 5px;
    height: 28px;
    border-radius: 3px;
    background-color: #999;
}
.ov-handle-l { left: -1px; }
.ov-handle-r { right: -2px; }

.requests {
    flex: 1;
    min-height: 0;
    display: grid;
    grid-template-columns: 277px 83px 83px 139px 84px 82px 82px;
    grid-template-rows: 39px 33px 31px 1fr;
    border-top: 1px solid #555;
    border-bottom: 1px solid #555;
    background-color: #282828;
}
.th, .td {
    display: flex;
    align-items: center;
    padding: 0 6px;
    white-space: nowrap;
    overflow: hidden;
    border-right: 1px solid #555;
}
.th {
    background-color: #333;
    border-bottom: 1px solid #555;
    color: #e8e8e8;
}
.td {
    background-color: #2c2c2c;
}
.td-alt {
    background-color: #1f1f1f;
}
.td-num {
    justify-content: flex-end;
}
.td-dim {
    color: #9a9a9a;
}
.td-link {
    padding-right: 0;
}
.td-link a {
    color: #6cb4f2;
}
.tf {
    border-right: 1px solid #555;
}
.th:nth-child(7), .td:nth-child(7n), .tf:nth-child(7n) {
    border-right: none;
}
.doc-icon {
    width: 18px;
    height: 18px;
    margin: 0 6px 0 2px;
    color: #bdbdbd;
}
.dt-summary {
    flex: none;
    height: 48px;
    display: flex;
    align-items: center;
    gap: 11px;
    padding-left: 13px;
    border-bottom: 1px solid #555;
}
.drawer {
    flex: none;
    height: 49px;
    display: flex;
    align-items: center;
    padding: 0 17px 0 9px;
}
.drawer-tab {
    width: 92px;
    height: 42px;
    display: flex;
    align-items: center;
    justify-content: center;
    background-color: #262626;
    border-radius: 4px;
    color: #7cb8f5;
}
.drawer-issues {
    margin: 0 26px 0 16px;
    color: #a0a0a0;
}
.drawer-rotate {
    margin: 0 27px 0 auto;
}

/* edge sidebar */
.sidebar {
    flex: none;
    width: 66px;
    height: 894px;
    padding-top: 2px;
    display: grid;
    grid-template-rows: repeat(7, 60.4px) 33px 62px 1fr 1px 61px;
    justify-items: center;
    align-items: center;
}
.side-sep {
    width: 42px;
    height: 1px;
    background-color: #666;
}
.side-gear {
    align-self: start;
    margin-top: 21px;
}

/* windows taskbar */
.taskbar {
    position: relative;
    flex: none;
    height: 72px;
    display: grid;
    grid-template-columns: 484px repeat(14, 66px) 1fr;
    align-items: center;
    background-color: #1b2229;
}
.weather {
    display: flex;
    align-items: center;
    gap: 7px;
    padding-left: 30px;
}
.weather-icon {
    position: relative;
    width: 40px;
    height: 36px;
    padding-top: 4px;
}
.badge {
    position: absolute;
    left: 15px;
    top: -12px;
    width: 24px;
    height: 24px;
    border-radius: 50%;
    background-color: #ff99a4;
    color: #111;
    font-size: 16px;
    line-height: 24px;
    text-align: center;
}
.weather-text {
    display: flex;
    flex-direction: column;
    line-height: 23px;
}
.weather-text small {
    font-size: 17px;
    color: #b8b8b8;
}
.task-slot {
    position: relative;
    height: 60px;
    display: flex;
    align-items: center;
    justify-content: center;
}
.task-active {
    background-color: #2b3238;
    border-radius: 6px;
}
.task-active::after {
    content: "";
    position: absolute;
    bottom: 2px;
    left: 20px;
    width: 24px;
    height: 5px;
    border-radius: 3px;
    background-color: #4cc2ff;
}
.task-run::after {
    content: "";
    position: absolute;
    bottom: 2px;
    left: 30px;
    width: 6px;
    height: 5px;
    border-radius: 50%;
    background-color: #9a9a9a;
}
.new-text {
    fill: #0d3d4a;
    font-size: 8px;
    font-weight: 700;
    text-anchor: middle;
}
.teams-text {
    fill: #fff;
    font-size: 14px;
    font-weight: 700;
    text-anchor: middle;
}
.tray {
    display: grid;
    grid-template-columns: 82px 56px 44px 48px 50px 22px 50px 95px 48px;
    justify-items: center;
    align-items: center;
}
.tray .ico-24 {
    color: #fff;
}
.tray > svg:nth-child(6) {
    width: 22px;
}
.clock {
    justify-self: end;
    display: flex;
    flex-direction: column;
    align-items: flex-end;
    gap: 1px;
    line-height: 23px;
    font-size: 18px;
    letter-spacing: -0.1px;
}

/* screenshot annotations */
.annotations {
    position: absolute;
    left: 0;
    top: 0;
    width: 1920px;
    height: 1080px;
    pointer-events: none;
}
.mark {
    fill: none;
    stroke: #e81c1c;
}
.mark-pen {
    stroke-linecap: round;
    stroke-linejoin: round;
}
.mark-fill {
    fill: #e81c1c;
}
```
